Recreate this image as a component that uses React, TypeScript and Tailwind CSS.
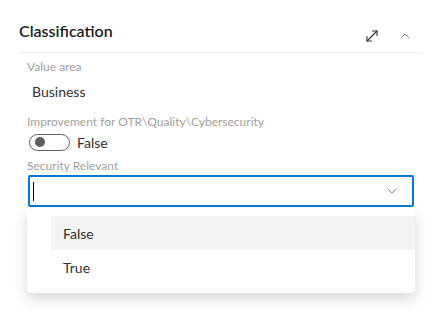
import { ChevronDown, ChevronUp } from 'lucide-react';

const FONT = "font-['Segoe_UI','Lato','Open_Sans',sans-serif]";

function ExpandIcon() {
  return (
    <svg width="14" height="14" viewBox="0 0 14 14" fill="none" stroke="#323130" strokeWidth="1.1" strokeLinecap="round" aria-hidden="true">
      <path d="M2 12L12 2" />
      <path d="M7.5 2H12V6.5" />
      <path d="M2 7.5V12H6.5" />
    </svg>
  );
}

function FieldLabel({ children }: { children: React.ReactNode }) {
  return <div className="h-[18px] text-[12px] leading-[18px] text-[#a19f9d]">{children}</div>;
}

export default function App() {
  return (
    <div className={`${FONT} h-[329px] w-[439px] overflow-hidden bg-white`}>
      <div className="ml-[19px] w-[404px] pt-[15px]">
        <div className="flex h-[38px] items-start justify-between border-b border-[#eaeaea]">
          <h2 className="text-[16px] font-semibold leading-[32px] text-[#201f1e]">Classification</h2>
          <div className="flex items-center gap-[18px] pr-[10px] pt-[13px]">
            <ExpandIcon />
            <ChevronUp size={16} strokeWidth={1.1} className="text-[#605e5c]" />
          </div>
        </div>

        <div className="pl-[8px] pt-[5px]">
          <FieldLabel>Value area</FieldLabel>
          <div className="flex h-[30px] items-center pl-[5px] text-[14px] text-[#323130]">Business</div>

          <div className="mt-[7px]">
            <FieldLabel>Improvement for OTR\Quality\Cybersecurity</FieldLabel>
          </div>
          <div className="flex h-[22px] items-center pl-[2px]">
            <div className="flex h-[17px] w-[41px] items-center rounded-full border border-[#605e5c] pl-[5px]">
              <div className="h-[10px] w-[10px] rounded-full bg-[#605e5c]" />
            </div>
            <span className="ml-[7px] text-[14px] text-[#323130]">False</span>
          </div>

          <div className="mt-[4px]">
            <FieldLabel>Security Relevant</FieldLabel>
          </div>
          <div className="relative">
            <div className="ml-[1px] flex h-[32px] w-[386px] items-center justify-between rounded-[2px] border-2 border-[#0078d4] pl-[3px] pr-[12px]">
              <div className="h-[19px] w-px bg-[#000]" />
              <ChevronDown size={16} strokeWidth={1.1} className="text-[#605e5c]" />
            </div>
            <div className="absolute left-0 top-[33px] z-10 w-[388px] rounded-[4px] bg-white py-[8px] shadow-[0_6px_14px_rgba(0,0,0,0.16)]">
              <div className="ml-[24px] flex h-[34px] items-center bg-[#f3f3f3] pl-[12px] text-[14px] text-[#323130]">False</div>
              <div className="ml-[24px] flex h-[35px] items-center pl-[12px] text-[14px] text-[#323130]">True</div>
            </div>
          </div>
        </div>
      </div>
    </div>
  );
}
